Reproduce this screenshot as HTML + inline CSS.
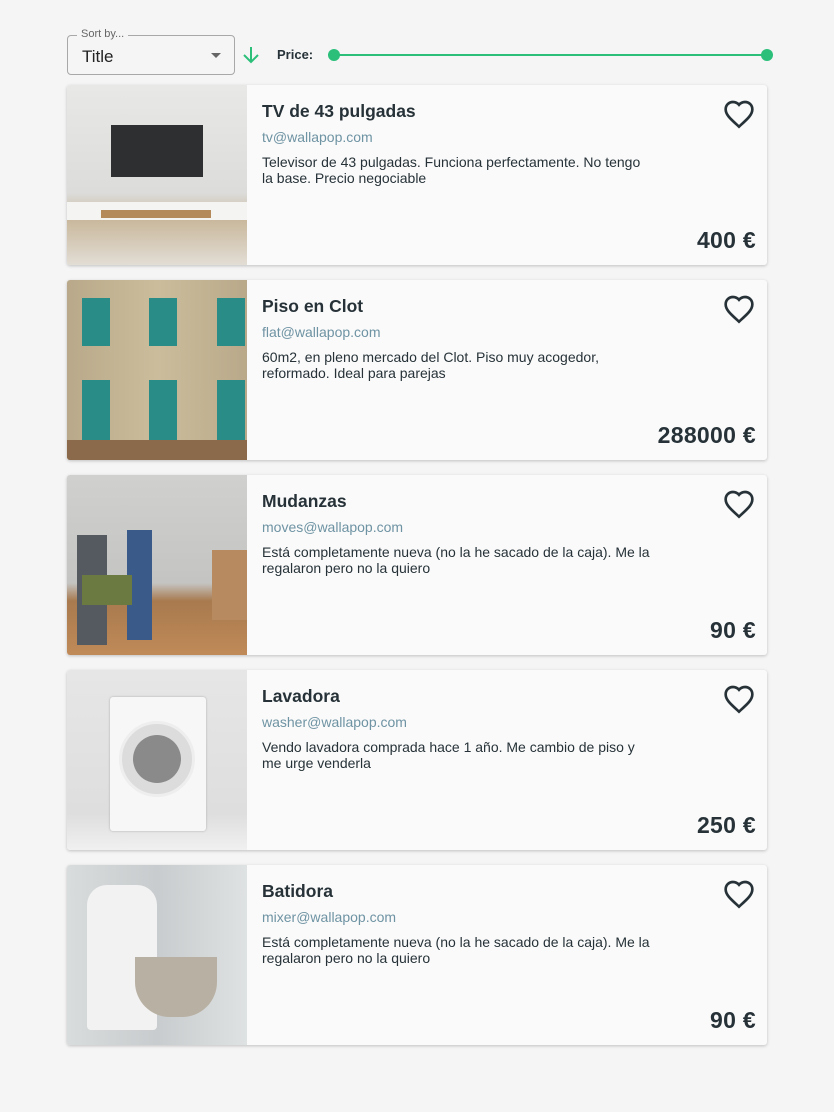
<!DOCTYPE html>
<html><head><meta charset="utf-8"><style>
body{margin:0;background:#f5f5f5;font-family:"Liberation Sans",Roboto,sans-serif;width:834px;height:1112px;position:relative;overflow:hidden}
.sel{position:absolute;left:67px;top:35px;width:166px;height:38px;border:1px solid #a8a8a8;border-radius:4px}
.sel .lab{position:absolute;left:9px;top:-8px;background:#f5f5f5;padding:0 4px;font-size:11px;color:#666}
.sel .v{position:absolute;left:14px;top:11px;font-size:17px;color:#222}
.sel .ar{position:absolute;right:13px;top:17px;border-left:5px solid transparent;border-right:5px solid transparent;border-top:5px solid #666}
.card{position:absolute;left:67px;width:700px;height:180px;background:#fafafa;border-radius:3px;box-shadow:0 1px 3px rgba(0,0,0,.22);overflow:hidden}
.img{position:absolute;left:0;top:0;width:180px;height:180px;overflow:hidden}
.t{position:absolute;left:195px;top:16px;font-size:17.5px;font-weight:bold;color:#263238}
.e{position:absolute;left:195px;top:44px;font-size:14px;color:#6e93a3}
.d{position:absolute;left:195px;top:69px;width:390px;font-size:14px;line-height:16px;color:#263238}
.p{position:absolute;right:11px;top:142px;font-size:23px;font-weight:bold;color:#263238;letter-spacing:.3px}
.h{position:absolute;right:12px;top:14px}
</style></head><body>
<div class="sel"><span class="lab">Sort by...</span><span class="v">Title</span><span class="ar"></span></div>
<svg style="position:absolute;left:241px;top:45px" width="20" height="20" viewBox="0 0 20 20"><path d="M10 2v15M3 10l7 7 7-7" stroke="#2bbf7a" stroke-width="2" fill="none"/></svg>
<div style="position:absolute;left:277px;top:47px;font-size:13px;font-weight:bold;color:#263238">Price:</div>
<div style="position:absolute;left:334px;top:54px;width:433px;height:2px;background:#2bbf7a"></div>
<div style="position:absolute;left:328px;top:49px;width:12px;height:12px;border-radius:50%;background:#2bbf7a"></div>
<div style="position:absolute;left:761px;top:49px;width:12px;height:12px;border-radius:50%;background:#2bbf7a"></div>

<div class="card" style="top:85px"><div class="img" style="background:linear-gradient(#e8e8e6,#dcdcda 60%,#c9b89c 75%,#e2ddd5)"><div style="position:absolute;left:44px;top:40px;width:92px;height:52px;background:#2d2f30"></div><div style="position:absolute;left:0;top:117px;width:180px;height:18px;background:#f4f4f2"></div><div style="position:absolute;left:34px;top:125px;width:110px;height:8px;background:#b48a5a"></div></div>
<div class="t">TV de 43 pulgadas</div><div class="e">tv@wallapop.com</div><div class="d">Televisor de 43 pulgadas. Funciona perfectamente. No tengo la base. Precio negociable</div><div class="p">400 €</div>
<svg class="h" width="32" height="30" viewBox="0 0 24 22"><path d="M12 20.5l-1.4-1.3C5.4 14.5 2 11.4 2 7.5 2 4.4 4.4 2 7.5 2c1.7 0 3.4.8 4.5 2.1C13.1 2.8 14.8 2 16.5 2 19.6 2 22 4.4 22 7.5c0 3.9-3.4 7-8.6 11.7z" fill="none" stroke="#263238" stroke-width="2"/></svg></div>

<div class="card" style="top:280px"><div class="img" style="background:linear-gradient(90deg,#b9a98a,#cbbd9c,#b9a98a)"><div style="position:absolute;left:15px;top:18px;width:28px;height:48px;background:#2a8c86"></div><div style="position:absolute;left:82px;top:18px;width:28px;height:48px;background:#2a8c86"></div><div style="position:absolute;left:150px;top:18px;width:28px;height:48px;background:#2a8c86"></div><div style="position:absolute;left:15px;top:100px;width:28px;height:60px;background:#2a8c86"></div><div style="position:absolute;left:82px;top:100px;width:28px;height:60px;background:#2a8c86"></div><div style="position:absolute;left:150px;top:100px;width:28px;height:60px;background:#2a8c86"></div><div style="position:absolute;left:0;top:160px;width:180px;height:20px;background:#8a6a4a"></div></div>
<div class="t">Piso en Clot</div><div class="e">flat@wallapop.com</div><div class="d">60m2, en pleno mercado del Clot. Piso muy acogedor, reformado. Ideal para parejas</div><div class="p">288000 €</div>
<svg class="h" width="32" height="30" viewBox="0 0 24 22"><path d="M12 20.5l-1.4-1.3C5.4 14.5 2 11.4 2 7.5 2 4.4 4.4 2 7.5 2c1.7 0 3.4.8 4.5 2.1C13.1 2.8 14.8 2 16.5 2 19.6 2 22 4.4 22 7.5c0 3.9-3.4 7-8.6 11.7z" fill="none" stroke="#263238" stroke-width="2"/></svg></div>

<div class="card" style="top:475px"><div class="img" style="background:linear-gradient(#d0d0ce,#c4c4c2 60%,#a87a4e 70%,#c08a58)"><div style="position:absolute;left:145px;top:75px;width:35px;height:70px;background:#b88a60"></div><div style="position:absolute;left:10px;top:60px;width:30px;height:110px;background:#555a60"></div><div style="position:absolute;left:60px;top:55px;width:25px;height:110px;background:#3a5a8a"></div><div style="position:absolute;left:15px;top:100px;width:50px;height:30px;background:#6a7a40"></div></div>
<div class="t">Mudanzas</div><div class="e">moves@wallapop.com</div><div class="d">Está completamente nueva (no la he sacado de la caja). Me la regalaron pero no la quiero</div><div class="p">90 €</div>
<svg class="h" width="32" height="30" viewBox="0 0 24 22"><path d="M12 20.5l-1.4-1.3C5.4 14.5 2 11.4 2 7.5 2 4.4 4.4 2 7.5 2c1.7 0 3.4.8 4.5 2.1C13.1 2.8 14.8 2 16.5 2 19.6 2 22 4.4 22 7.5c0 3.9-3.4 7-8.6 11.7z" fill="none" stroke="#263238" stroke-width="2"/></svg></div>

<div class="card" style="top:670px"><div class="img" style="background:linear-gradient(#e6e6e6,#dedede 80%,#f0f0f0)"><div style="position:absolute;left:43px;top:27px;width:96px;height:134px;background:#f7f7f7;border-radius:3px;box-shadow:0 0 2px #aaa"></div><div style="position:absolute;left:52px;top:51px;width:76px;height:76px;border-radius:50%;background:#dcdcdc;border:3px solid #eee;box-sizing:border-box"></div><div style="position:absolute;left:66px;top:65px;width:48px;height:48px;border-radius:50%;background:#8a8a8a"></div></div>
<div class="t">Lavadora</div><div class="e">washer@wallapop.com</div><div class="d">Vendo lavadora comprada hace 1 año. Me cambio de piso y me urge venderla</div><div class="p">250 €</div>
<svg class="h" width="32" height="30" viewBox="0 0 24 22"><path d="M12 20.5l-1.4-1.3C5.4 14.5 2 11.4 2 7.5 2 4.4 4.4 2 7.5 2c1.7 0 3.4.8 4.5 2.1C13.1 2.8 14.8 2 16.5 2 19.6 2 22 4.4 22 7.5c0 3.9-3.4 7-8.6 11.7z" fill="none" stroke="#263238" stroke-width="2"/></svg></div>

<div class="card" style="top:865px"><div class="img" style="background:linear-gradient(90deg,#d8dcdc,#c8ccce,#dfe2e2)"><div style="position:absolute;left:20px;top:20px;width:70px;height:145px;background:#f2f2f2;border-radius:20px 20px 4px 4px"></div><div style="position:absolute;left:68px;top:92px;width:82px;height:60px;background:#b8b0a2;border-radius:0 0 35px 35px"></div></div>
<div class="t">Batidora</div><div class="e">mixer@wallapop.com</div><div class="d">Está completamente nueva (no la he sacado de la caja). Me la regalaron pero no la quiero</div><div class="p">90 €</div>
<svg class="h" width="32" height="30" viewBox="0 0 24 22"><path d="M12 20.5l-1.4-1.3C5.4 14.5 2 11.4 2 7.5 2 4.4 4.4 2 7.5 2c1.7 0 3.4.8 4.5 2.1C13.1 2.8 14.8 2 16.5 2 19.6 2 22 4.4 22 7.5c0 3.9-3.4 7-8.6 11.7z" fill="none" stroke="#263238" stroke-width="2"/></svg></div>
</body></html>
